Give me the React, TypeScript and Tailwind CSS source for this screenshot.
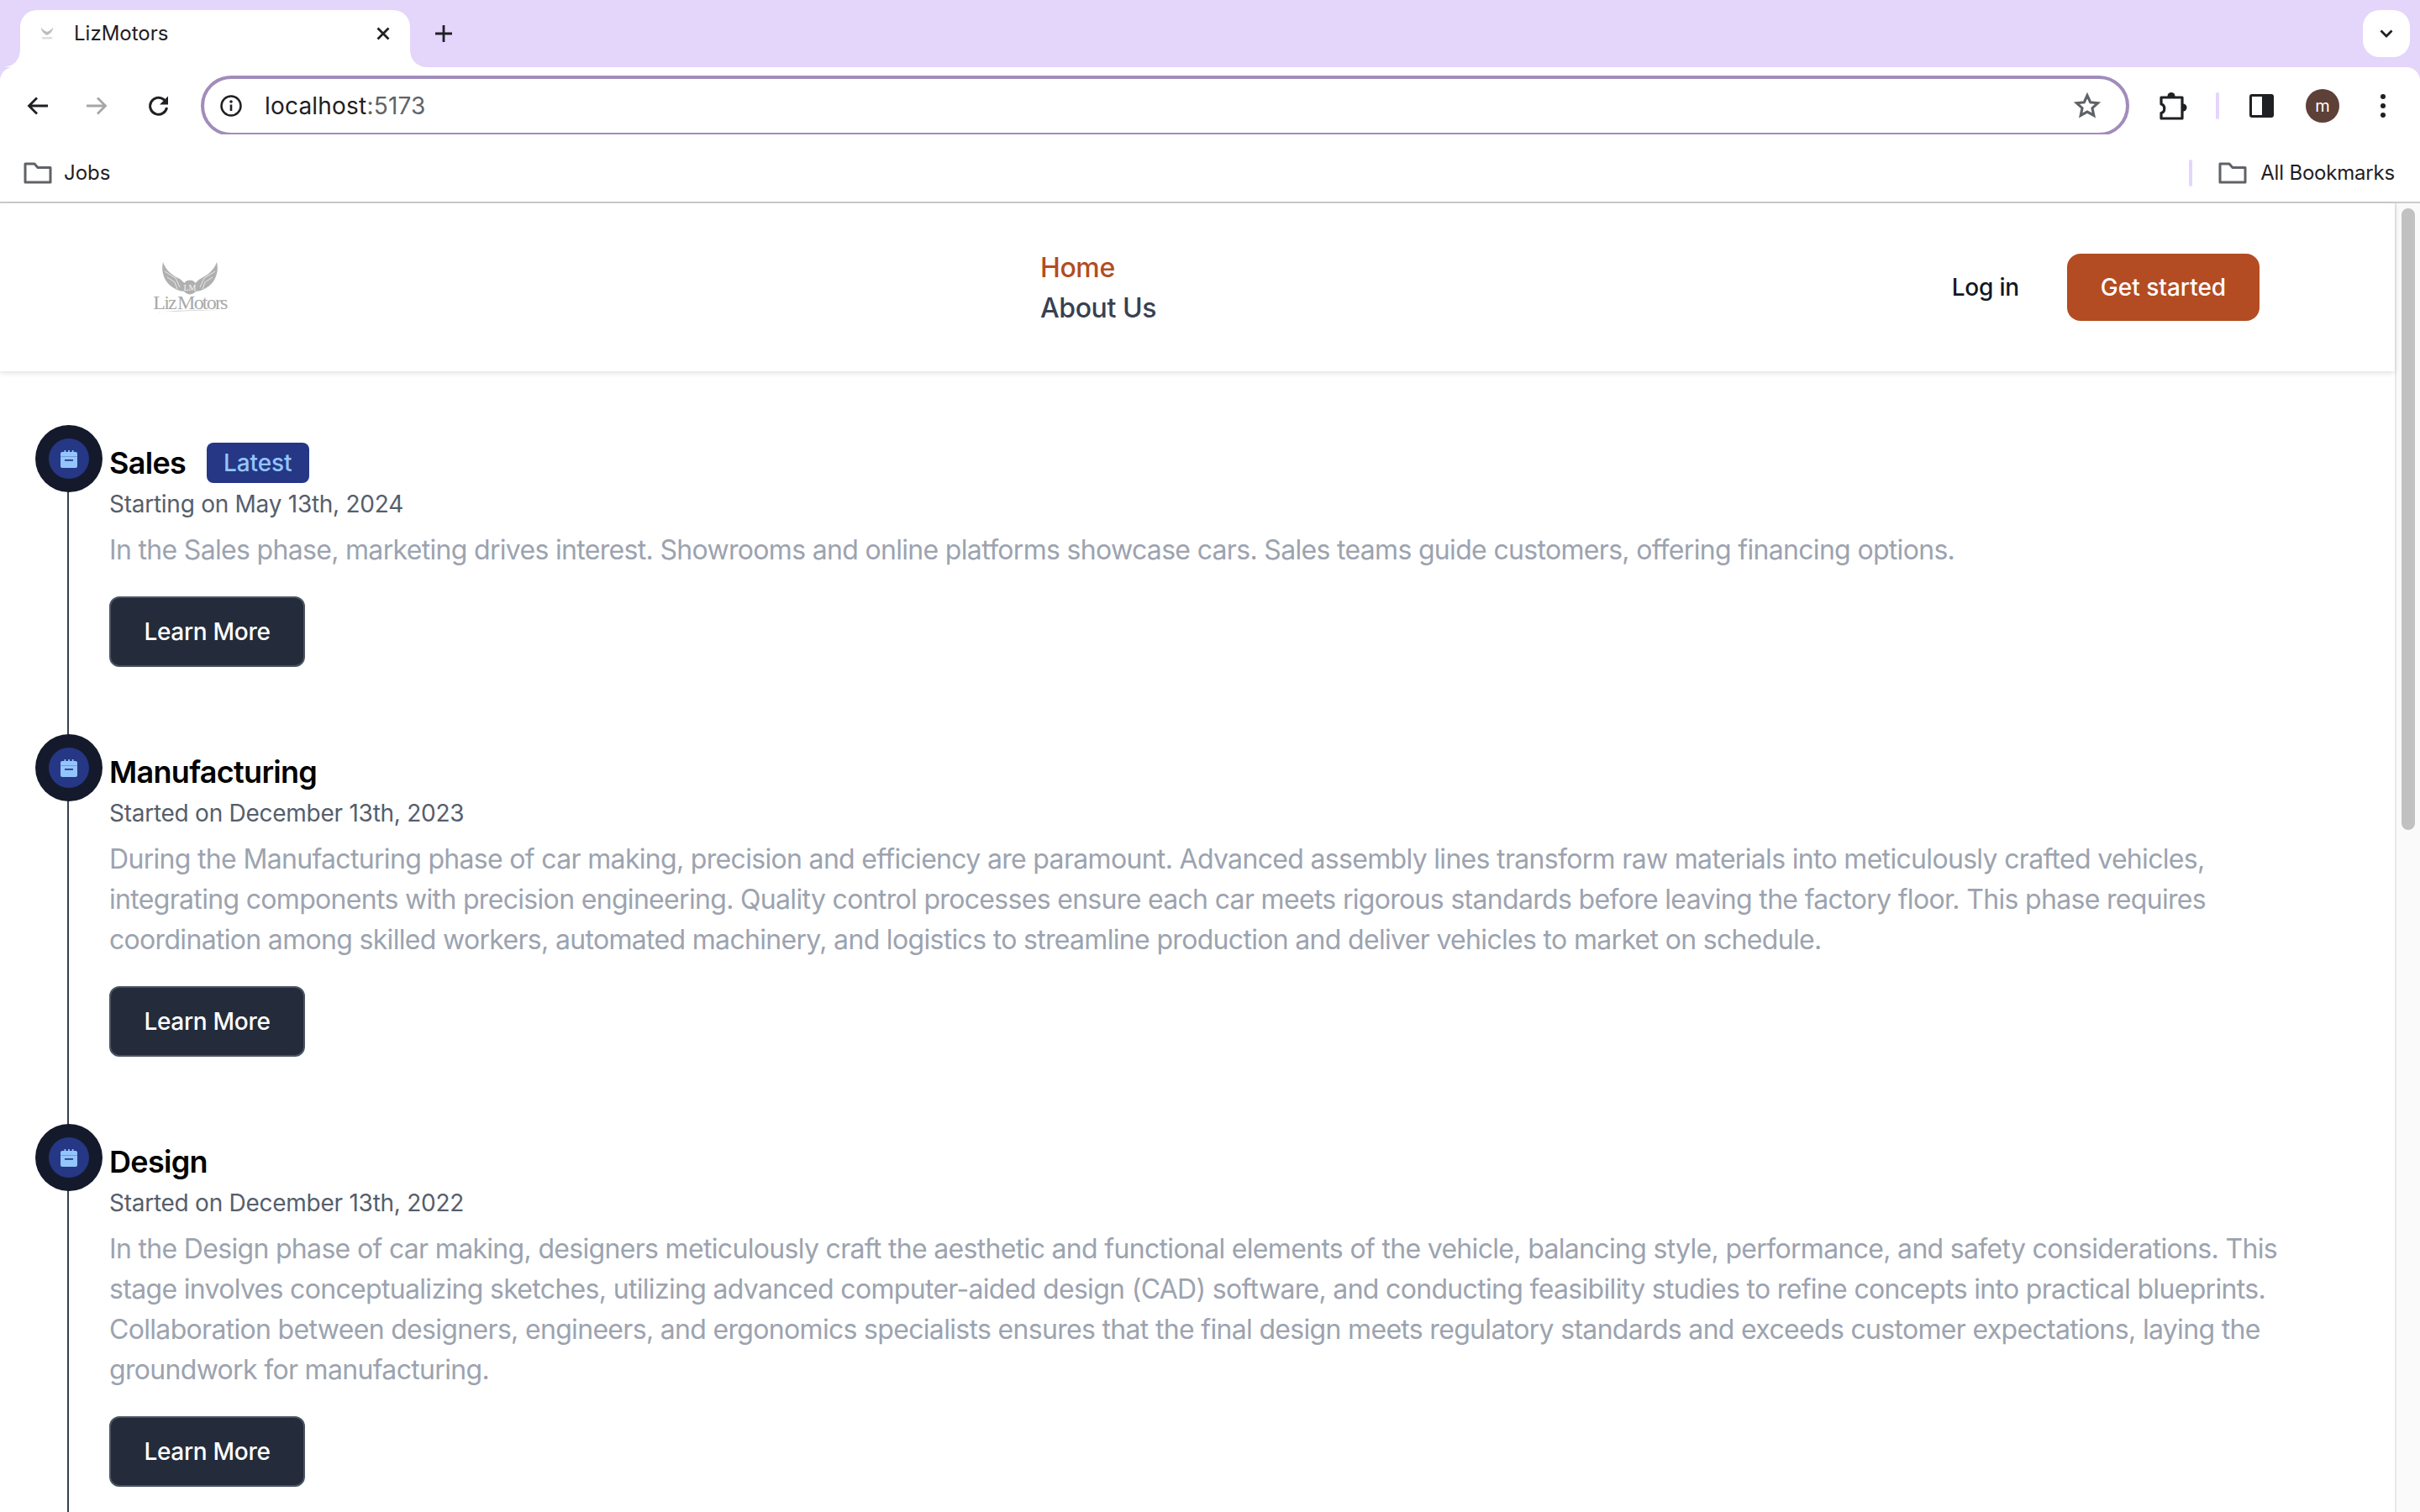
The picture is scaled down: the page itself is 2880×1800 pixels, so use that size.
import React from "react";

const Cal = () => (
  <svg viewBox="0 0 20 21" className="w-[20px] h-[21px] block" fill="#93c5fd">
    <path d="M4.500 0h1.800v2H4.500zM9.100 0h1.800v2H9.100zM13.700 0h1.800v2h-1.800z" />
    <path fillRule="evenodd" d="M2 2h16a2 2 0 0 1 2 2v15a2 2 0 0 1-2 2H2a2 2 0 0 1-2-2V4a2 2 0 0 1 2-2zm3 9v1.800h10V11H5z" />
    <path d="M0 7h20v.8H0z" fill="#6f8fd0" />
  </svg>
);

const FolderIcon = () => (
  <svg width="34" height="26" viewBox="0 0 34 26" fill="none" stroke="#5f6368" strokeWidth="3" className="block">
    <path d="M2 2h11l4 4.500h15V24H2z" strokeLinejoin="round" />
  </svg>
);

const Logo = () => (
  <div className="w-[84px] h-[60px] flex flex-col items-center">
    <svg width="72" height="40" viewBox="0 0 72 40" className="block shrink-0">
      <path d="M4 0C1 12 6 25 17 31c5 3 10 4 14 4l-1-9c-2-3-4-5-8-7C14 15 7 9 4 0z" fill="#b0b0b0" />
      <path d="M68 0c3 12-2 25-13 31-5 3-10 4-14 4l1-9c2-3 4-5 8-7 8-4 15-10 18-19z" fill="#b0b0b0" />
      <path d="M6 11l13 8 5 11M9 18l9 6 3 8M66 11l-13 8-5 11M63 18l-9 6-3 8" stroke="#e8e8e8" strokeWidth="1" fill="none" />
      <circle cx="36" cy="30" r="8.500" fill="#b0b0b0" />
      <text x="36" y="34" textAnchor="middle" fontFamily="'Liberation Serif', serif" fontSize="10" fill="#f4f4f4">LM</text>
    </svg>
    <span className="text-[#a9a9a9] text-[24px] leading-[17px] tracking-[-1.8px] [word-spacing:-2px] font-['Liberation_Serif',serif] whitespace-nowrap">Liz Motors</span>
    <svg width="72" height="3" viewBox="0 0 72 3" className="block shrink-0 -ml-[8px]"><path d="M0 3C20 0 50 0 72 1C50 1 20 1 0 3z" fill="#b8b8b8" /></svg>
  </div>
);

const items = [
  { t: "Sales", latest: true, d: "Starting on May 13th, 2024", body: "In the Sales phase, marketing drives interest. Showrooms and online platforms showcase cars. Sales teams guide customers, offering financing options." },
  { t: "Manufacturing", d: "Started on December 13th, 2023", body: "During the Manufacturing phase of car making, precision and efficiency are paramount. Advanced assembly lines transform raw materials into meticulously crafted vehicles, integrating components with precision engineering. Quality control processes ensure each car meets rigorous standards before leaving the factory floor. This phase requires coordination among skilled workers, automated machinery, and logistics to streamline production and deliver vehicles to market on schedule." },
  { t: "Design", d: "Started on December 13th, 2022", body: "In the Design phase of car making, designers meticulously craft the aesthetic and functional elements of the vehicle, balancing style, performance, and safety considerations. This stage involves conceptualizing sketches, utilizing advanced computer-aided design (CAD) software, and conducting feasibility studies to refine concepts into practical blueprints. Collaboration between designers, engineers, and ergonomics specialists ensures that the final design meets regulatory standards and exceeds customer expectations, laying the groundwork for manufacturing." },
];

export default function App() {
  return (
    <div className="w-[2880px] h-[1800px] overflow-hidden flex flex-col bg-[#e4d5fb] font-['Inter',sans-serif] text-[#1f2023]">
      {/* tab strip */}
      <div className="h-[80px] shrink-0 flex items-start relative">
        <div className="ml-[24px] mt-[12px] w-[464px] h-[68px] bg-white rounded-t-[20px] flex items-center pl-[24px] pr-[22px] pb-[12px] relative">
          <svg width="22" height="22" viewBox="0 0 22 22" className="absolute left-[-22px] bottom-0 block"><path d="M22 0v22H0C14 22 22 14 22 0z" fill="#fff" /></svg>
          <svg width="22" height="22" viewBox="0 0 22 22" className="absolute right-[-22px] bottom-0 block"><path d="M0 0v22h22C8 22 0 14 0 0z" fill="#fff" /></svg>
          <svg width="16" height="15" viewBox="0 0 16 15" className="block mr-[24px] shrink-0">
            <path d="M1 0c0 4 3 7 7 9 4-2 7-5 7-9-2 2-4 4-7 5-3-1-5-3-7-5z" fill="#bdbdbd" />
            <rect x="2" y="11" width="12" height="2.500" fill="#dedede" />
          </svg>
          <span className="text-[24px] leading-[32px] flex-1">LizMotors</span>
          <svg width="16" height="16" viewBox="0 0 16 16" stroke="#1f2023" strokeWidth="2.800" className="block mr-[2px]"><path d="M1.500 1.500l13 13M14.500 1.500l-13 13" /></svg>
        </div>
        <svg width="20" height="20" viewBox="0 0 20 20" stroke="#1f2023" strokeWidth="2.800" className="block ml-[30px] mt-[30px]"><path d="M10 0v20M0 10h20" /></svg>
        <div className="ml-auto mr-[12px] mt-[12px] w-[56px] h-[56px] bg-white rounded-[20px] flex items-center justify-center">
          <svg width="16" height="12" viewBox="0 0 16 12" fill="none" stroke="#1f2023" strokeWidth="2.800" className="block"><path d="M1.500 2.500l6.500 6.500 6.500-6.500" /></svg>
        </div>
      </div>
      {/* toolbar */}
      <div className="h-[80px] shrink-0 flex items-center bg-white rounded-t-[16px] pt-[12px]">
        <svg width="25" height="24" viewBox="0 0 25 24" fill="none" stroke="#1f2023" strokeWidth="2.800" className="block ml-[32px]"><path d="M25 12H3M12 2.500L2.500 12l9.500 9.500" /></svg>
        <svg width="25" height="24" viewBox="0 0 25 24" fill="none" stroke="#a6a6a6" strokeWidth="2.800" className="block ml-[46px]"><path d="M0 12h22M13 2.500l9.500 9.500-9.500 9.500" /></svg>
        <svg width="25" height="26" viewBox="0 0 25 26" fill="none" stroke="#1f2023" strokeWidth="3" className="block ml-[48px]"><path d="M22.500 15a10 10 0 1 1-3.500-9.500l3 3" /><path d="M24 1.500v10H14z" fill="#1f2023" stroke="none" /></svg>
        <div className="ml-[38px] w-[2295px] h-[72px] border-[4px] border-[#a18cbb] rounded-full flex items-center pl-[18px] pr-[29px]">
          <svg width="28" height="28" viewBox="0 0 28 28" fill="none" className="block mr-[26px] shrink-0"><circle cx="14" cy="14" r="11.500" stroke="#1f2023" strokeWidth="2.500" /><circle cx="14" cy="9" r="1.800" fill="#1f2023" /><path d="M14 12.500V20" stroke="#1f2023" strokeWidth="2.600" /></svg>
          <span className="text-[28px] leading-[36px] text-[#1f2023] tracking-[0.2px]">localhost<span className="text-[#5f6368]">:5173</span></span>
          <svg width="34" height="34" viewBox="0 0 24 24" fill="none" stroke="#5f6368" strokeWidth="2.200" className="block ml-auto"><path d="M12 3.200l2.600 5.800 6.300.7-4.700 4.200 1.300 6.200L12 17l-5.500 3.100 1.300-6.200-4.700-4.200 6.300-.7z" /></svg>
        </div>
        <svg width="33" height="34" viewBox="0 0 33 34" className="block ml-[36px]">
          <circle cx="14" cy="5.500" r="4.500" fill="#1f2023" />
          <circle cx="28" cy="19" r="4.500" fill="#1f2023" />
          <path d="M2 7h25v25H2v-6.500c5-1 5-9.500 0-10.500z" fill="#fff" stroke="#1f2023" strokeWidth="3.200" strokeLinejoin="round" />
        </svg>
        <div className="ml-[34px] w-[4px] h-[32px] bg-[#e4d5fb] rounded-full" />
        <div className="ml-[36px] w-[29px] h-[28px] border-[3px] border-[#1f2023] rounded-[3px] flex justify-end"><div className="w-[11px] h-full bg-[#1f2023]" /></div>
        <div className="ml-[38px] w-[40px] h-[40px] rounded-full bg-[#5d4037] flex items-center justify-center text-white text-[20px] leading-none">m</div>
        <div className="ml-[49px] flex flex-col gap-[5px]">
          <div className="w-[6px] h-[6px] rounded-full bg-[#1f2023]" />
          <div className="w-[6px] h-[6px] rounded-full bg-[#1f2023]" />
          <div className="w-[6px] h-[6px] rounded-full bg-[#1f2023]" />
        </div>
      </div>
      {/* bookmarks */}
      <div className="h-[82px] shrink-0 flex items-center bg-white border-b-[2px] border-[#cccccc] pl-[28px] pr-[30px] pt-[12px] text-[24px]">
        <FolderIcon />
        <span className="ml-[14px]">Jobs</span>
        <div className="ml-auto w-[4px] h-[32px] bg-[#e4d5fb] rounded-full" />
        <div className="ml-[31px]"><FolderIcon /></div>
        <span className="ml-[16px] tracking-[-0.2px]">All Bookmarks</span>
      </div>
      {/* page */}
      <div className="flex-1 flex min-h-0 bg-white">
        <div className="w-[2850px] min-w-0 flex flex-col">
          <header className="h-[200px] shrink-0 shadow-[0_2px_6px_rgba(0,0,0,0.12)] flex items-center relative">
            <div className="ml-[184px] w-[84px]"><Logo /></div>
            <nav className="ml-[970px] mt-[2px] flex flex-col text-[32px] leading-[48px] font-medium tracking-[-0.4px] w-[560px]">
              <span className="text-[#b34c22]">Home</span>
              <span className="text-[#374151]">About Us</span>
            </nav>
            <span className="ml-auto text-[28px] leading-[40px] font-medium text-[#111827] tracking-[-0.2px]">Log in</span>
            <div className="ml-[57px] mr-[161px] w-[229px] h-[80px] rounded-[16px] bg-[#b34c22] flex items-center justify-center text-white text-[28px] font-medium">Get started</div>
          </header>
          <div className="pl-[80px] pr-[130px] pt-[81px] relative flex-1 min-h-0">
            <div className="absolute left-[80px] top-[64px] w-[2px] h-[1400px] bg-[#374151]" />
            {items.map((it) => (
              <div key={it.t} className="relative pl-[50px] pb-[97px]">
                <div className="absolute left-[-38px] top-[-17px] w-[80px] h-[80px] rounded-full bg-[#141a2b] flex items-center justify-center">
                  <div className="w-[48px] h-[48px] rounded-full bg-[#253785] flex items-center justify-center"><Cal /></div>
                </div>
                <div className="flex items-center h-[56px]">
                  <span className="text-[36px] leading-[56px] font-semibold text-black tracking-[-0.7px]">{it.t}</span>
                  {it.latest && <span className="ml-[25px] bg-[#253785] text-[#93c5fd] rounded-[8px] text-[28px] font-medium leading-[40px] px-[20px] py-[4px] tracking-[-0.1px]">Latest</span>}
                </div>
                <div className="mt-[1px] text-[28px] leading-[40px] text-[#565e6c] tracking-[-0.26px]">{it.d}</div>
                <p className="text-[32px] leading-[48px] text-[#9ca3af] tracking-[-0.68px] mt-[11px] mb-[31px]">{it.body}</p>
                <div className="w-[233px] h-[84px] rounded-[12px] bg-[#242b3a] border-[2px] border-[#4b5563] flex items-center justify-center text-white text-[28px] font-medium tracking-[-0.3px]">Learn More</div>
              </div>
            ))}
          </div>
        </div>
        <div className="w-[30px] shrink-0 bg-[#fafafa] border-l-[2px] border-[#e8e8e8] pl-[6px] pt-[6px]">
          <div className="w-[16px] h-[740px] bg-[#c1c1c1] rounded-full" />
        </div>
      </div>
    </div>
  );
}
